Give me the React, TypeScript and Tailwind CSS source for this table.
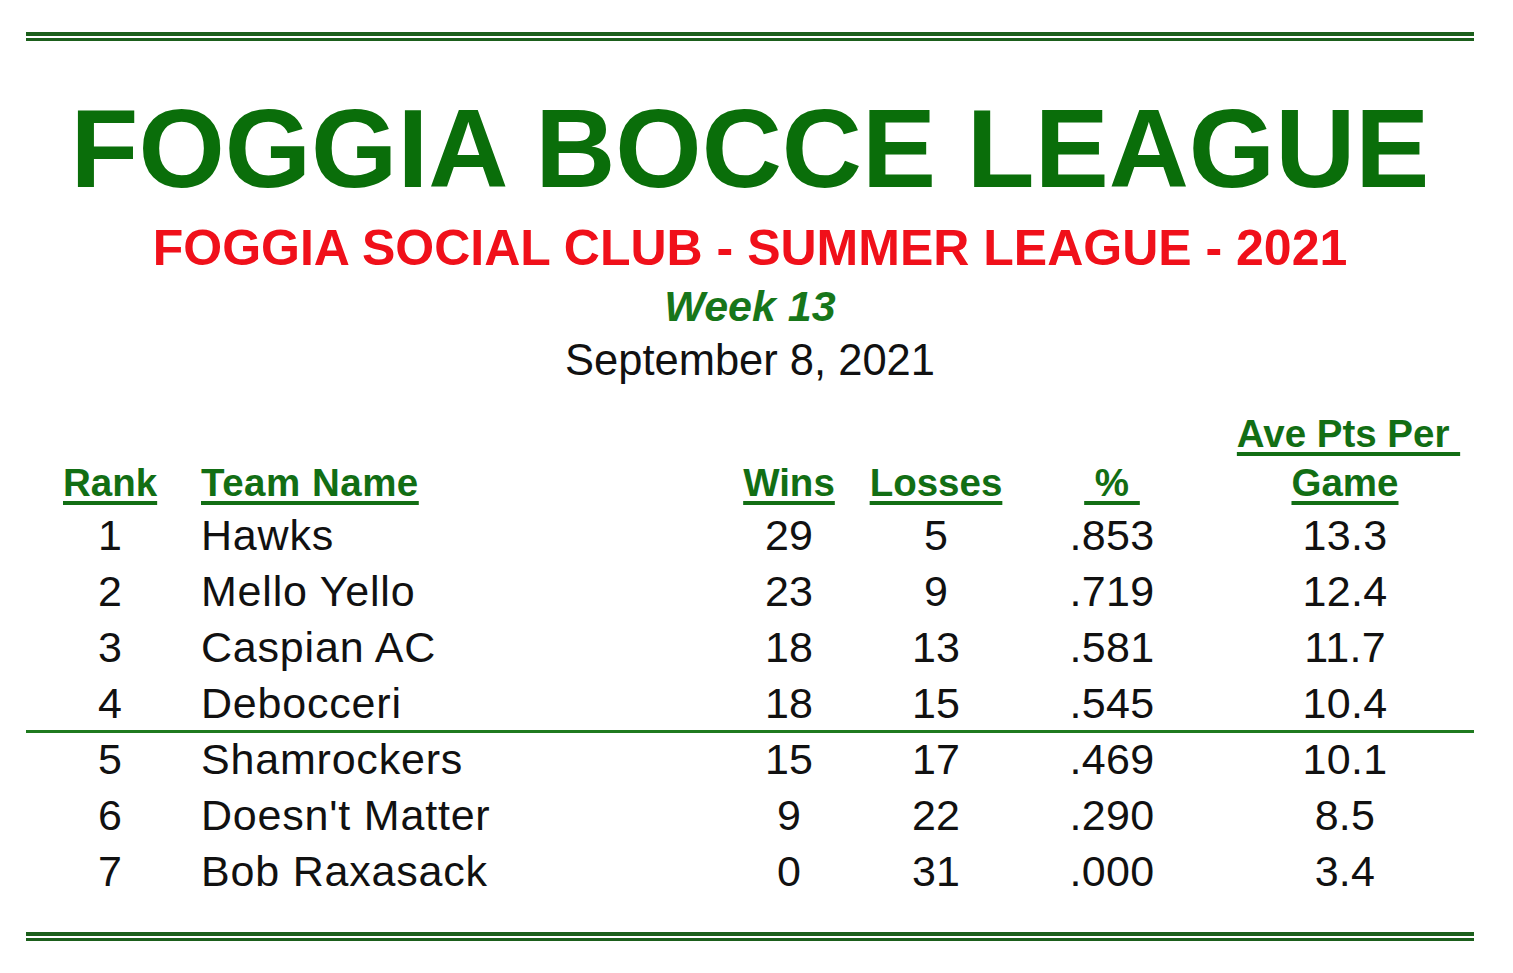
const cols = "grid grid-cols-[94px_583px_98px_196px_156px_310px] pl-[37px]";
const head = "underline decoration-4 underline-offset-[5px] whitespace-pre";

const teams = [
  { rank: 1, name: "Hawks", wins: 29, losses: 5, pct: ".853", ave: "13.3" },
  { rank: 2, name: "Mello Yello", wins: 23, losses: 9, pct: ".719", ave: "12.4" },
  { rank: 3, name: "Caspian AC", wins: 18, losses: 13, pct: ".581", ave: "11.7" },
  { rank: 4, name: "Debocceri", wins: 18, losses: 15, pct: ".545", ave: "10.4" },
  { rank: 5, name: "Shamrockers", wins: 15, losses: 17, pct: ".469", ave: "10.1" },
  { rank: 6, name: "Doesn't Matter", wins: 9, losses: 22, pct: ".290", ave: "8.5" },
  { rank: 7, name: "Bob Raxasack", wins: 0, losses: 31, pct: ".000", ave: "3.4" },
];

type Team = (typeof teams)[number];

// double green rule used at top and bottom of the sheet
const DoubleRule = () => (
  <div>
    <div className="h-[4px] bg-[#1b5f1b]" />
    <div className="mt-[2px] h-[3px] bg-[#1b5f1b]" />
  </div>
);

const Row = ({ t }: { t: Team }) => (
  <div className={`${cols} h-[56px] text-[43px] leading-[56px] text-[#111]`}>
    <div className="text-center">{t.rank}</div>
    <div className="pl-[44px] whitespace-nowrap tracking-[0.8px]">{t.name}</div>
    <div className="text-center">{t.wins}</div>
    <div className="text-center">{t.losses}</div>
    <div className="text-center tracking-[0.3px]">{t.pct}</div>
    <div className="text-center tracking-[0.3px]">{t.ave}</div>
  </div>
);

export default function App() {
  return (
    <div className="min-h-screen w-full bg-white font-['Liberation_Sans',Arial,sans-serif]">
      <div className="ml-[26px] w-[1448px] pt-[32px]">
        <DoubleRule />

        {/* Title block */}
        <h1 className="mt-[53px] whitespace-nowrap text-center text-[111px] font-bold leading-none text-[#0a6e0a]">
          FOGGIA BOCCE LEAGUE
        </h1>
        <h2 className="mt-[18px] whitespace-nowrap text-center text-[50px] font-bold leading-none text-[#f0101a]">
          FOGGIA SOCIAL CLUB - SUMMER LEAGUE - 2021
        </h2>
        <p className="mt-[12px] text-center text-[43px] font-bold italic leading-none text-[#17761a]">
          Week 13
        </p>
        <p className="mt-[11px] text-center text-[43.5px] leading-none text-[#111]">
          September 8, 2021
        </p>

        {/* Standings */}
        <div className={`${cols} mt-[26px] text-[38.5px] font-bold leading-[49px] text-[#126e14]`}>
          <div className="self-end text-center">
            <span className={head}>Rank</span>
          </div>
          <div className="self-end pl-[44px] tracking-[0.5px]">
            <span className={head}>Team Name</span>
          </div>
          <div className="self-end text-center">
            <span className={head}>Wins</span>
          </div>
          <div className="self-end text-center">
            <span className={head}>Losses</span>
          </div>
          <div className="self-end text-center">
            <span className={head}>{" % "}</span>
          </div>
          <div className="flex flex-col items-center">
            <span className={`${head} pl-[7px]`}>{"Ave Pts Per "}</span>
            <span className={head}>Game</span>
          </div>
        </div>

        {teams.slice(0, 4).map((t) => (
          <Row key={t.rank} t={t} />
        ))}
        <div className="-mt-[1px] mb-[-2px] h-[3px] bg-[#1f7a1f]" />
        {teams.slice(4).map((t) => (
          <Row key={t.rank} t={t} />
        ))}

        <div className="mt-[33px]">
          <DoubleRule />
        </div>
      </div>
    </div>
  );
}
